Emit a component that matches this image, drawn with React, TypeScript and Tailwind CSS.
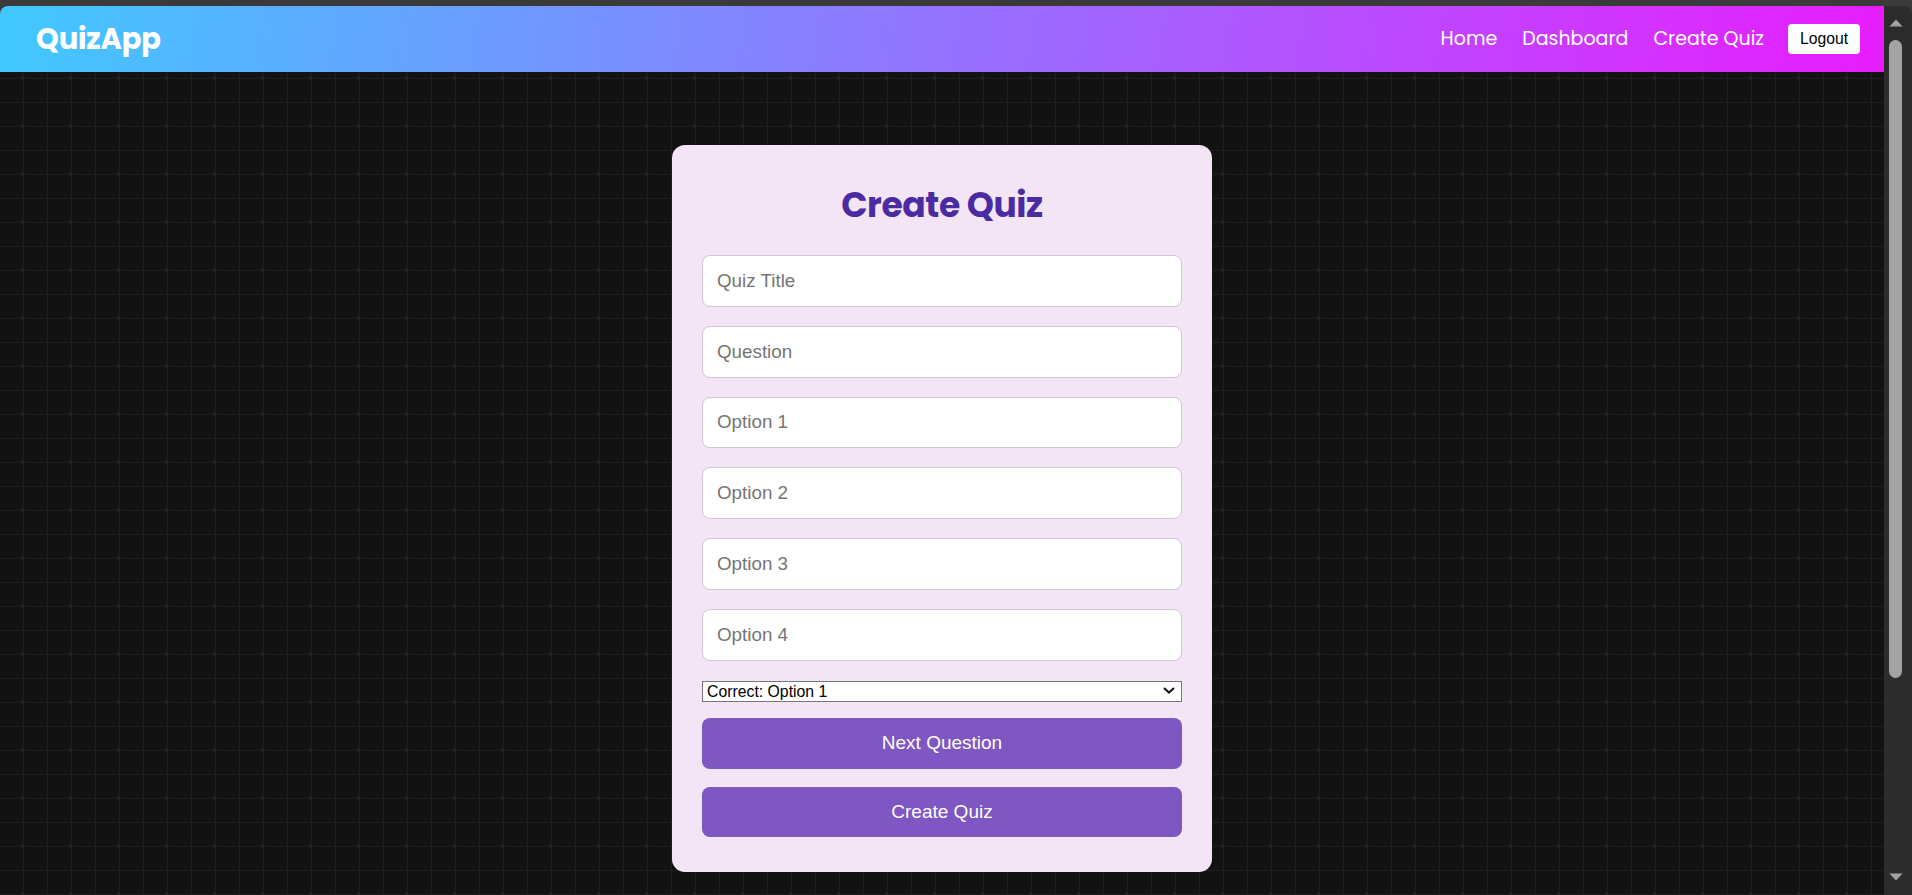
import { useState } from "react";

const heading = { fontFamily: '"Poppins", "Inter", "Noto Sans", sans-serif' };
const body = { fontFamily: '"Liberation Sans", Arial, sans-serif' };

export default function App() {
  const [title, setTitle] = useState("");
  const [question, setQuestion] = useState("");
  const [options, setOptions] = useState(["", "", "", ""]);
  const [correct, setCorrect] = useState("0");

  const setOption = (i: number, v: string) => {
    const next = [...options];
    next[i] = v;
    setOptions(next);
  };

  return (
    <div className="h-[895px] w-full bg-[#3a3a3a] pt-[6px] flex overflow-hidden">
      {/* Page */}
      <div className="flex-1 h-[889px] rounded-tl-[8px] overflow-hidden flex flex-col bg-[#121212] bg-[linear-gradient(to_right,#1e1e1e_1px,transparent_1px),linear-gradient(to_bottom,#1e1e1e_1px,transparent_1px),radial-gradient(circle,#2c2c2c_1.5px,transparent_2px)] bg-[size:24px_24px,24px_24px,48px_48px] bg-[position:23px_0px,23px_0px,-1px_0px]">
        {/* Navbar */}
        <header className="h-[66px] shrink-0 flex items-center justify-between pl-[36px] pr-[24px] bg-[linear-gradient(100deg,#40c9ff,#e81cff)]">
          <h1 style={heading} className="text-white font-bold text-[29px] leading-none tracking-[-0.2px]">
            QuizApp
          </h1>
          <nav style={heading} className="flex items-center text-white text-[19px]">
            <a href="#" className="mr-[25px]">Home</a>
            <a href="#" className="mr-[25px]">Dashboard</a>
            <a href="#" className="mr-[24px]">Create Quiz</a>
            <button
              style={body}
              className="bg-white text-black text-[15.7px] h-[30px] px-[12px] rounded-[4px] leading-none"
            >
              Logout
            </button>
          </nav>
        </header>

        {/* Form */}
        <main className="flex-1 flex justify-center pt-[73px]">
          <div className="w-[540px] self-start bg-[#f3e5f5] rounded-[13px] pt-[39px] px-[30px] pb-[35px] flex flex-col">
            <h2 style={heading} className="text-center text-[#4a2ba2] font-bold text-[34.5px] leading-[42px] mb-[29px] tracking-[-0.4px]">
              Create Quiz
            </h2>

            <div style={body} className="flex flex-col gap-[19px]">
              <input
                value={title}
                onChange={(e) => setTitle(e.target.value)}
                placeholder="Quiz Title"
                className="h-[51.8px] w-full bg-white border border-[#cfc8d2] rounded-[8px] px-[14px] text-[18.8px] text-[#222] placeholder:text-[#757575] outline-none"
              />
              <input
                value={question}
                onChange={(e) => setQuestion(e.target.value)}
                placeholder="Question"
                className="h-[51.8px] w-full bg-white border border-[#cfc8d2] rounded-[8px] px-[14px] text-[18.8px] text-[#222] placeholder:text-[#757575] outline-none"
              />
              {options.map((o, i) => (
                <input
                  key={i}
                  value={o}
                  onChange={(e) => setOption(i, e.target.value)}
                  placeholder={`Option ${i + 1}`}
                  className="h-[51.8px] w-full bg-white border border-[#cfc8d2] rounded-[8px] px-[14px] text-[18.8px] text-[#222] placeholder:text-[#757575] outline-none"
                />
              ))}

              <div className="relative h-[20.5px]">
                <select
                  value={correct}
                  onChange={(e) => setCorrect(e.target.value)}
                  className="appearance-none w-full h-full bg-white border border-[#767676] pl-[4px] text-[15.8px] leading-none text-black outline-none"
                >
                  <option value="0">Correct: Option 1</option>
                  <option value="1">Correct: Option 2</option>
                  <option value="2">Correct: Option 3</option>
                  <option value="3">Correct: Option 4</option>
                </select>
                <svg
                  className="absolute right-[7px] top-[7px] pointer-events-none"
                  width="12"
                  height="7"
                  viewBox="0 0 12 7"
                  fill="none"
                >
                  <path d="M1 1l5 4.6L11 1" stroke="#111" strokeWidth="2" />
                </svg>
              </div>

              <button className="h-[50.5px] w-full bg-[#7e57c2] text-white rounded-[8px] text-[19px] -mt-[1px]">
                Next Question
              </button>
              <button className="h-[50.5px] w-full bg-[#7e57c2] text-white rounded-[8px] text-[19px] -mt-[1px]">
                Create Quiz
              </button>
            </div>
          </div>
        </main>
      </div>

      {/* Scrollbar */}
      <div className="w-[28px] h-[889px] bg-[#2c2c2c] rounded-tr-[8px] flex flex-col items-start pl-[4px]">
        <div className="h-[34px] w-[15px] flex items-center justify-center">
          <svg width="14" height="8" viewBox="0 0 14 8">
            <path d="M7 0.5L13.5 7.5H0.5Z" fill="#a3a3a3" />
          </svg>
        </div>
        <div className="w-[13px] ml-[1px] h-[638px] rounded-full bg-[#a3a3a3]" />
        <div className="flex-1" />
        <div className="h-[24px] w-[15px] flex items-start justify-center pt-[2px]">
          <svg width="14" height="8" viewBox="0 0 14 8">
            <path d="M0.5 0.5H13.5L7 7.5Z" fill="#a3a3a3" />
          </svg>
        </div>
      </div>
    </div>
  );
}
